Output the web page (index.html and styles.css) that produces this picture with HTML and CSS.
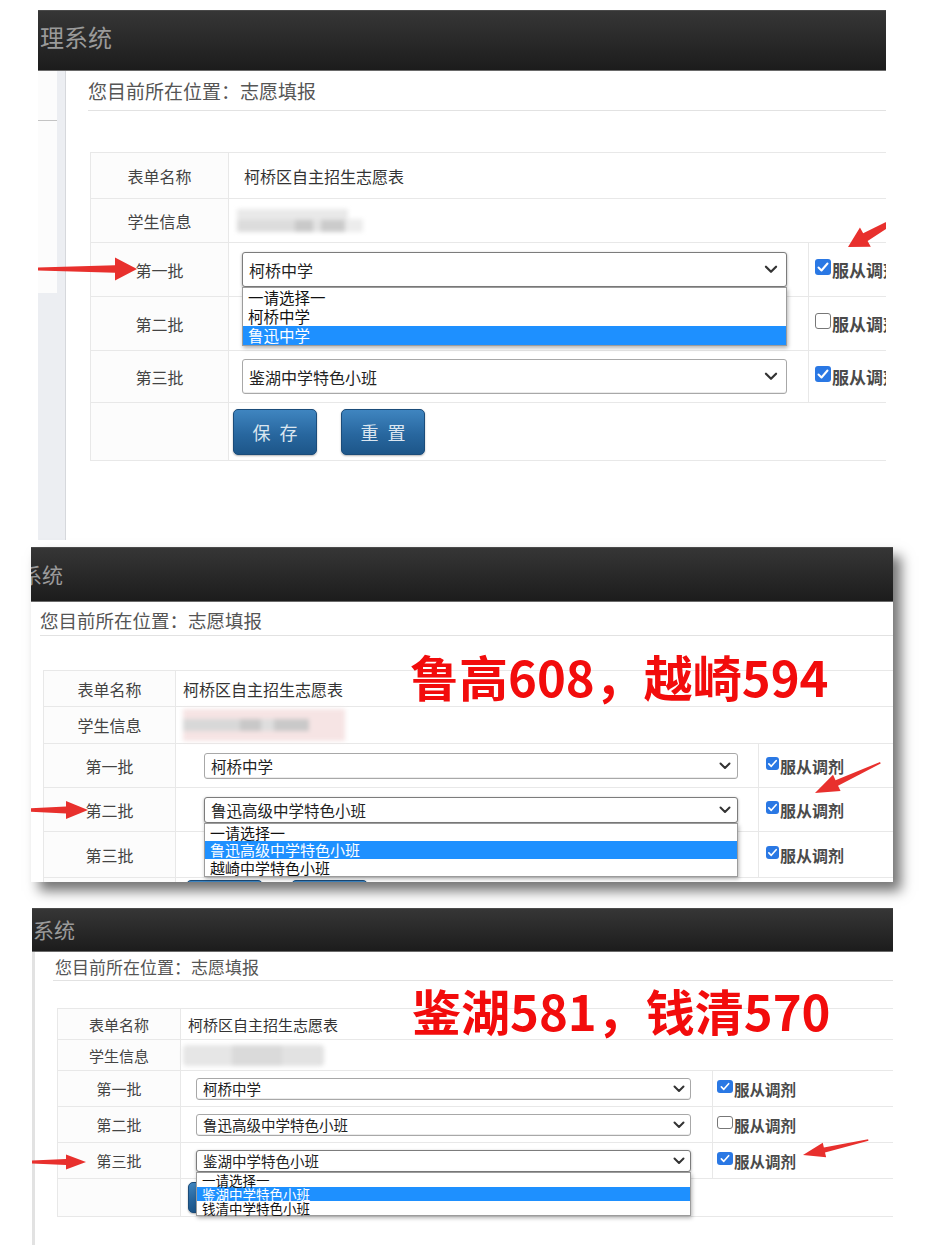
FILE: index.html
```html
<!DOCTYPE html>
<html lang="zh-CN">
<head>
<meta charset="utf-8">
<title>志愿填报</title>
<link rel="stylesheet" href="styles.css">
</head>
<body>
<div class="page">

  <!-- Screenshot 1 -->
  <section class="shot shot1">
    <header class="bar"><span class="bar-title">理系统</span></header>
    <div class="body">
      <aside class="side"><div class="side-box"><div class="side-line"></div></div></aside>
      <main class="content">
        <div class="crumb">您目前所在位置：志愿填报</div>
        <table class="form">
          <colgroup><col class="c1"><col class="c2"><col class="c3"></colgroup>
          <tr class="r-name"><td class="lbl">表单名称</td><td class="val" colspan="2">柯桥区自主招生志愿表</td></tr>
          <tr class="r-info"><td class="lbl">学生信息</td><td class="val" colspan="2"><div class="blur"></div></td></tr>
          <tr class="r-pick"><td class="lbl">第一批</td>
            <td><div class="selw"><div class="sel open"><span>柯桥中学</span><svg class="chev" viewBox="0 0 12 8"><path d="M1.5 1.5 L6 6 L10.5 1.5"/></svg></div>
              <ul class="opts"><li>一请选择一</li><li>柯桥中学</li><li class="hl">鲁迅中学</li></ul></div></td>
            <td><div class="chk"><span class="cb on"><svg viewBox="0 0 16 16"><path d="M3.5 8.5 L6.5 11.5 L12.5 4.5"/></svg></span>服从调剂</div></td></tr>
          <tr class="r-pick"><td class="lbl">第二批</td>
            <td><div class="selw"><div class="sel"><span></span><svg class="chev" viewBox="0 0 12 8"><path d="M1.5 1.5 L6 6 L10.5 1.5"/></svg></div></div></td>
            <td><div class="chk"><span class="cb off"></span>服从调剂</div></td></tr>
          <tr class="r-pick r-last"><td class="lbl">第三批</td>
            <td><div class="selw"><div class="sel"><span>鉴湖中学特色小班</span><svg class="chev" viewBox="0 0 12 8"><path d="M1.5 1.5 L6 6 L10.5 1.5"/></svg></div></div></td>
            <td><div class="chk"><span class="cb on"><svg viewBox="0 0 16 16"><path d="M3.5 8.5 L6.5 11.5 L12.5 4.5"/></svg></span>服从调剂</div></td></tr>
          <tr class="r-btn"><td class="lbl"></td>
            <td colspan="2"><div class="btns"><span class="btn">保存</span><span class="btn">重置</span></div></td></tr>
        </table>
      </main>
    </div>
    <svg class="arrows" width="848" height="530" viewBox="0 0 848 530">
      <g transform="translate(99 259)"><polygon points="-100,-1.5 -22,-3.8 -22,-11.5 0,0 -22,11.5 -22,3.8 -100,1.5"/></g>
      <g transform="translate(810 237) rotate(150.4)"><polygon points="-60,-2 -20,-4.5 -20,-11 0,0 -20,11 -20,4.5 -60,2"/></g>
    </svg>
  </section>

  <!-- Screenshot 2 -->
  <section class="shot shot2">
    <header class="bar"><span class="bar-title">系统</span></header>
    <div class="body">
      <main class="content">
        <div class="crumb">您目前所在位置：志愿填报</div>
        <table class="form">
          <colgroup><col class="c1"><col class="c2"><col class="c3"></colgroup>
          <tr class="r-name"><td class="lbl">表单名称</td><td class="val" colspan="2">柯桥区自主招生志愿表</td></tr>
          <tr class="r-info"><td class="lbl">学生信息</td><td class="val" colspan="2"><div class="blur"></div></td></tr>
          <tr class="r-pick"><td class="lbl">第一批</td>
            <td><div class="selw"><div class="sel"><span>柯桥中学</span><svg class="chev" viewBox="0 0 12 8"><path d="M1.5 1.5 L6 6 L10.5 1.5"/></svg></div></div></td>
            <td><div class="chk"><span class="cb on"><svg viewBox="0 0 16 16"><path d="M3.5 8.5 L6.5 11.5 L12.5 4.5"/></svg></span>服从调剂</div></td></tr>
          <tr class="r-pick"><td class="lbl">第二批</td>
            <td><div class="selw"><div class="sel open"><span>鲁迅高级中学特色小班</span><svg class="chev" viewBox="0 0 12 8"><path d="M1.5 1.5 L6 6 L10.5 1.5"/></svg></div>
              <ul class="opts"><li>一请选择一</li><li class="hl">鲁迅高级中学特色小班</li><li>越崎中学特色小班</li></ul></div></td>
            <td><div class="chk"><span class="cb on"><svg viewBox="0 0 16 16"><path d="M3.5 8.5 L6.5 11.5 L12.5 4.5"/></svg></span>服从调剂</div></td></tr>
          <tr class="r-pick r-last"><td class="lbl">第三批</td>
            <td><div class="selw"><div class="sel"><span></span><svg class="chev" viewBox="0 0 12 8"><path d="M1.5 1.5 L6 6 L10.5 1.5"/></svg></div></div></td>
            <td><div class="chk"><span class="cb on"><svg viewBox="0 0 16 16"><path d="M3.5 8.5 L6.5 11.5 L12.5 4.5"/></svg></span>服从调剂</div></td></tr>
          <tr class="r-btn"><td class="lbl"></td>
            <td colspan="2"><div class="btns"><span class="btn">保存</span><span class="btn">重置</span></div></td></tr>
        </table>
      </main>
    </div>
    <div class="score">鲁高608，越崎594</div>
    <svg class="arrows" width="862" height="335" viewBox="0 0 862 335">
      <g transform="translate(57 263)"><polygon points="-60,-1.5 -22,-3.5 -22,-9 0,0 -22,9 -22,3.5 -60,1.5"/></g>
      <g transform="translate(784 246) rotate(155.2)"><polygon points="-72,-0.8 -24,-3 -24,-9 0,0 -24,9 -24,3 -72,0.8"/></g>
    </svg>
  </section>

  <!-- Screenshot 3 -->
  <section class="shot shot3">
    <header class="bar"><span class="bar-title">系统</span></header>
    <div class="body">
      <main class="content">
        <div class="crumb">您目前所在位置：志愿填报</div>
        <table class="form">
          <colgroup><col class="c1"><col class="c2"><col class="c3"></colgroup>
          <tr class="r-name"><td class="lbl">表单名称</td><td class="val" colspan="2">柯桥区自主招生志愿表</td></tr>
          <tr class="r-info"><td class="lbl">学生信息</td><td class="val" colspan="2"><div class="blur"></div></td></tr>
          <tr class="r-pick"><td class="lbl">第一批</td>
            <td><div class="selw"><div class="sel"><span>柯桥中学</span><svg class="chev" viewBox="0 0 12 8"><path d="M1.5 1.5 L6 6 L10.5 1.5"/></svg></div></div></td>
            <td><div class="chk"><span class="cb on"><svg viewBox="0 0 16 16"><path d="M3.5 8.5 L6.5 11.5 L12.5 4.5"/></svg></span>服从调剂</div></td></tr>
          <tr class="r-pick"><td class="lbl">第二批</td>
            <td><div class="selw"><div class="sel"><span>鲁迅高级中学特色小班</span><svg class="chev" viewBox="0 0 12 8"><path d="M1.5 1.5 L6 6 L10.5 1.5"/></svg></div></div></td>
            <td><div class="chk"><span class="cb off"></span>服从调剂</div></td></tr>
          <tr class="r-pick r-last"><td class="lbl">第三批</td>
            <td><div class="selw"><div class="sel open"><span>鉴湖中学特色小班</span><svg class="chev" viewBox="0 0 12 8"><path d="M1.5 1.5 L6 6 L10.5 1.5"/></svg></div>
              <ul class="opts"><li>一请选择一</li><li class="hl">鉴湖中学特色小班</li><li>钱清中学特色小班</li></ul></div></td>
            <td><div class="chk"><span class="cb on"><svg viewBox="0 0 16 16"><path d="M3.5 8.5 L6.5 11.5 L12.5 4.5"/></svg></span>服从调剂</div></td></tr>
          <tr class="r-btn"><td class="lbl"></td>
            <td colspan="2"><div class="btns"><span class="btn">保存</span><span class="btn">重置</span></div></td></tr>
        </table>
      </main>
    </div>
    <div class="score">鉴湖581，钱清570</div>
    <svg class="arrows" width="861" height="337" viewBox="0 0 861 337">
      <g transform="translate(54 254)"><polygon points="-56,-1.3 -20,-3 -20,-7.5 0,0 -20,7.5 -20,3 -56,1.3"/></g>
      <g transform="translate(771 247) rotate(167)"><polygon points="-67,-0.8 -22,-2.5 -22,-7.5 0,0 -22,7.5 -22,2.5 -67,0.8"/></g>
    </svg>
  </section>

</div>
</body>
</html>
```

FILE: styles.css
```css
* { box-sizing: border-box; }

html, body {
  margin: 0;
  background: #ffffff;
}

body {
  font-family: "Noto Sans CJK SC", "Noto Sans", "DejaVu Sans", sans-serif;
  color: #333;
}

.page {
  width: 938px;
  height: 1251px;
  overflow: hidden;
  padding-top: 10px;
}

/* ---------- screenshot frame ---------- */
.shot {
  position: relative;
  overflow: hidden;
  background: #fff;
  display: flex;
  flex-direction: column;
}

.shot1 { margin-left: 38px; width: 848px; height: 530px; }
.shot2 {
  margin-left: 31px; margin-top: 7px; width: 862px; height: 335px;
  box-shadow: 8px 9px 12px rgba(0, 0, 0, 0.55);
}
.shot3 { margin-left: 32px; margin-top: 26px; width: 861px; height: 337px; }

/* ---------- dark top bar ---------- */
.bar {
  flex: none;
  display: flex;
  align-items: center;
  background: linear-gradient(#363636, #202020 85%, #1c1c1c);
  border-top: 1px solid #4a4a4a;
  border-bottom: 1px solid #6a6a6a;
  color: #9a9a9a;
  white-space: nowrap;
}
.shot1 .bar { height: 61px; font-size: 24px; padding: 0 0 8px 2px; }
.shot2 .bar { height: 55px; font-size: 21px; padding: 0 0 1px 0; }
.shot2 .bar-title { margin-left: -10px; }
.shot3 .bar { height: 44px; font-size: 21px; padding: 0 0 2px 1px; }

.body {
  flex: 1;
  display: flex;
  min-height: 0;
}

/* sidebar remnant (screenshot 1) */
.side {
  flex: none;
  width: 28px;
  background: #eceef2;
  border-right: 1px solid #d6d8dc;
}
.side-box {
  width: 19px;
  height: 222px;
  background: #fcfcfc;
}
.side-line {
  position: relative;
  top: 49px;
  height: 1px;
  background: #c4c4c4;
}

.content {
  flex: 1;
  min-width: 0;
}
.shot1 .content { padding-left: 22px; }
.shot2 .content { padding-left: 9px; }
.shot3 .content { padding-left: 18px; border-left: 3px solid #e2e2e2; }

/* ---------- breadcrumb ---------- */
.crumb {
  color: #555;
  white-space: nowrap;
  border-bottom: 1px solid #e2e2e2;
}
.shot1 .crumb { font-size: 19px; line-height: 22px; padding: 9px 0 8px 0; }
.shot2 .crumb { font-size: 18.5px; line-height: 22px; padding: 7px 0 4px 0; }
.shot3 .crumb { font-size: 17px; line-height: 20px; padding: 5px 0 3px 2px; }

/* ---------- form table ---------- */
.form {
  border-collapse: collapse;
  table-layout: fixed;
}
.form td {
  border: 1px solid #e8e8e8;
  padding: 0;
  vertical-align: middle;
}
.lbl {
  text-align: center;
  color: #444;
  background: #fcfcfc;
}
.val { color: #333; white-space: nowrap; }

.shot1 .form { margin: 41px 0 0 2px; width: 918px; font-size: 16px; }
.shot1 .c1 { width: 138px; }
.shot1 .c2 { width: 580px; }
.shot1 .c3 { width: 200px; }
.shot1 .r-name td { height: 46px; }
.shot1 .r-info td { height: 44px; }
.shot1 .r-pick td { height: 54px; }
.shot1 .r-last td { height: 52px; }
.shot1 .r-btn td { height: 58px; }
.shot1 .val { padding-left: 15px; }

.shot2 .form { margin: 34px 0 0 3px; width: 880px; font-size: 16px; }
.shot2 .c1 { width: 132px; }
.shot2 .c2 { width: 583px; }
.shot2 .c3 { width: 165px; }
.shot2 .r-name td { height: 36px; }
.shot2 .r-info td { height: 37px; }
.shot2 .r-pick td { height: 44px; }
.shot2 .r-last td { height: 46px; }
.shot2 .r-btn td { height: 40px; vertical-align: top; padding-top: 2px; }
.shot2 .val { padding-left: 7px; }

.shot3 .form { margin: 27px 0 0 4px; width: 860px; font-size: 15px; }
.shot3 .c1 { width: 123px; }
.shot3 .c2 { width: 532px; }
.shot3 .c3 { width: 205px; }
.shot3 .r-name td { height: 31px; }
.shot3 .r-info td { height: 31px; }
.shot3 .r-pick td { height: 36px; }
.shot3 .r-btn td { height: 38px; }
.shot3 .val { padding-left: 7px; }

/* blurred student info */
.blur {
  filter: blur(2px);
}
.shot1 .blur {
  margin-left: -7px;
  width: 126px;
  height: 24px;
  background:
    linear-gradient(90deg, #e9e9e9 0 88%, transparent 88%) top / 100% 45% no-repeat,
    linear-gradient(90deg, #dcdcdc 0 46%, #c9c9c9 46% 60%, #e3e3e3 60% 67%, #cbcbcb 67% 86%, #ececec 86% 100%) bottom / 100% 55% no-repeat;
}
.shot2 .blur {
  width: 162px;
  height: 32px;
  background:
    linear-gradient(90deg, #d8d8d8 0 35%, #c8c8c8 35% 48%, #dedede 48% 56%, #c9c9c9 56% 78%, transparent 78%) 0 10px / 100% 12px no-repeat,
    #f6e4e4;
}
.shot3 .blur {
  margin-left: -5px;
  width: 141px;
  height: 21px;
  border-radius: 4px;
  background: linear-gradient(90deg, #e6e6e6 0 35%, #dadada 35% 70%, #e2e2e2 70%);
}

/* ---------- select boxes ---------- */
.selw { position: relative; }
.sel {
  display: flex;
  align-items: center;
  justify-content: space-between;
  border: 1px solid #a8a8a8;
  border-radius: 3px;
  background: #fff;
  color: #222;
  white-space: nowrap;
  box-shadow: inset 0 -1px 0 rgba(0, 0, 0, 0.08);
}
.sel.open {
  border-color: #7c7c7c;
  box-shadow: 0 1px 3px rgba(0, 0, 0, 0.35);
}
.chev {
  flex: none;
  fill: none;
  stroke: #333;
  stroke-width: 2;
  stroke-linecap: round;
  stroke-linejoin: round;
}

.shot1 .selw { margin-left: 13px; width: 545px; }
.shot1 .sel { height: 35px; padding: 0 8px 0 6px; }
.shot1 .chev { width: 14px; height: 9px; }

.shot2 .selw { margin-left: 28px; width: 534px; }
.shot2 .sel { height: 26px; padding: 0 6px 0 6px; font-size: 15.5px; }
.shot2 .chev { width: 12px; height: 8px; }

.shot3 .selw { margin-left: 15px; width: 495px; }
.shot3 .sel { height: 22px; padding: 0 5px 0 6px; font-size: 14.5px; }
.shot3 .chev { width: 12px; height: 8px; }

/* dropdown list */
.opts {
  position: absolute;
  left: 0;
  right: 0;
  top: 100%;
  z-index: 3;
  margin: 0;
  padding: 0;
  list-style: none;
  background: #fff;
  border: 1px solid #9c9c9c;
  box-shadow: 1px 2px 4px rgba(0, 0, 0, 0.3);
}
.opts li {
  padding-left: 5px;
  color: #111;
  white-space: nowrap;
}
.opts li.hl { background: #1e90ff; color: #fff; }

.shot1 .opts li { height: 19px; line-height: 19px; font-size: 15.5px; }
.shot2 .opts li { height: 17.5px; line-height: 17.5px; font-size: 15px; }
.shot3 .opts li { height: 14px; line-height: 14px; font-size: 13.5px; }

/* ---------- checkbox column ---------- */
.chk {
  display: flex;
  align-items: center;
  white-space: nowrap;
  font-weight: 700;
  color: #4a4a4a;
}
.cb {
  flex: none;
  display: inline-flex;
  border-radius: 3px;
  margin-top: -5px;
  margin-right: 1px;
}
.cb svg {
  width: 100%;
  height: 100%;
  fill: none;
  stroke: #fff;
  stroke-width: 2;
  stroke-linecap: round;
  stroke-linejoin: round;
}
.cb.on { background: #2a78e4; }
.cb.off { background: #fff; border: 1px solid #777; }

.shot1 .chk { padding-left: 6px; font-size: 17px; }
.shot1 .cb { width: 16px; height: 16px; }
.shot2 .chk { padding-left: 7px; font-size: 16px; }
.shot2 .cb { width: 13px; height: 13px; }
.shot3 .chk { padding-left: 4px; font-size: 15.5px; }
.shot3 .cb { width: 16px; height: 13px; }

/* ---------- buttons ---------- */
.btns { display: flex; }
.btn {
  display: flex;
  align-items: center;
  justify-content: center;
  background: linear-gradient(#3f85c0, #28679f 55%, #1d5689);
  border: 1px solid #1b4c7a;
  border-radius: 5px;
  color: #dbe6f0;
  box-shadow: 0 1px 2px rgba(0, 0, 0, 0.3);
}
.shot1 .btns { margin-left: 4px; gap: 24px; }
.shot1 .btn { width: 84px; height: 46px; font-size: 18px; letter-spacing: 9px; padding-left: 9px; }
.shot2 .btns { margin-left: 10px; gap: 28px; }
.shot2 .btn { width: 77px; height: 30px; font-size: 16px; letter-spacing: 8px; padding-left: 8px; }
.shot3 .btns { margin-left: 7px; gap: 28px; }
.shot3 .btn { width: 77px; height: 31px; font-size: 15px; letter-spacing: 8px; padding-left: 8px; }

/* ---------- overlays: annotation text and arrows ---------- */
.score {
  position: absolute;
  z-index: 4;
  color: #f20c0c;
  font-weight: 700;
  font-size: 49px;
  line-height: 1;
  white-space: nowrap;
}
.shot2 .score { left: 379px; top: 104px; }
.shot3 .score { left: 380px; top: 77px; }

.arrows {
  position: absolute;
  left: 0;
  top: 0;
  z-index: 5;
  pointer-events: none;
  fill: #e8302d;
}
```
